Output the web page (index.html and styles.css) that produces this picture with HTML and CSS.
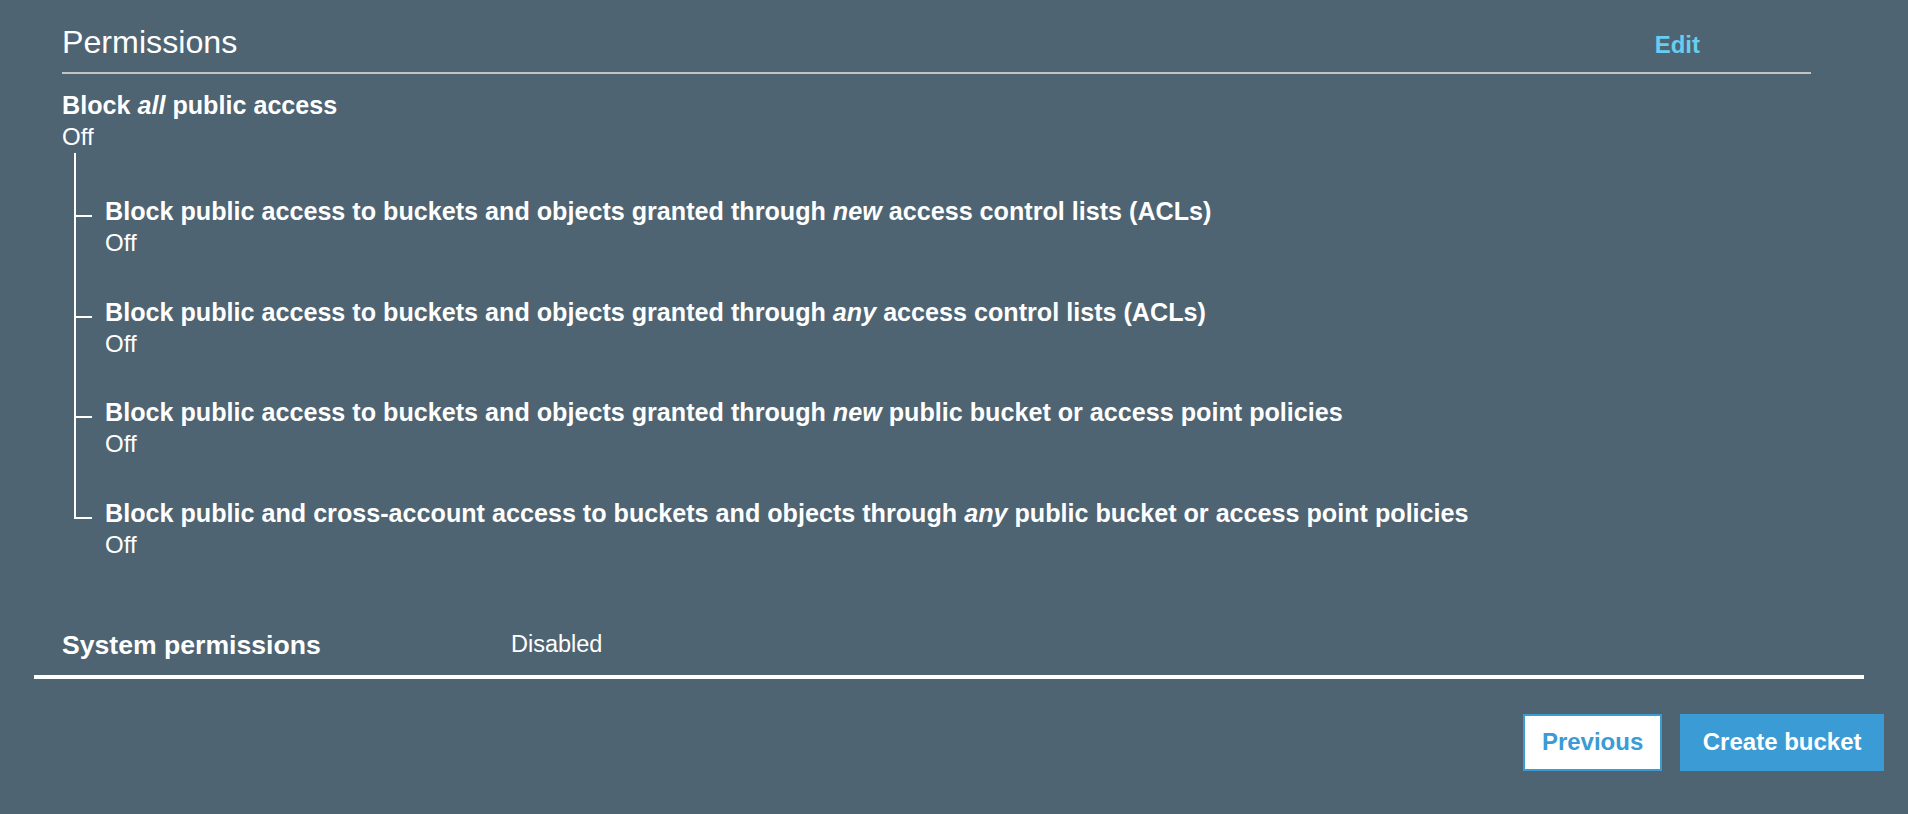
FILE: index.html
```html
<!DOCTYPE html>
<html lang="en">
<head>
<meta charset="utf-8">
<title>Permissions</title>
<link rel="stylesheet" href="styles.css">
</head>
<body>
<div class="page">
  <section class="panel">
    <div class="panel-head">
      <h2 class="panel-title">Permissions</h2>
      <a class="edit-link" href="#">Edit</a>
    </div>
    <div class="block-all">
      <div class="label">Block <em>all</em> public access</div>
      <div class="value">Off</div>
    </div>
    <ul class="tree">
      <li class="tree-item">
        <div class="label">Block public access to buckets and objects granted through <em>new</em> access control lists (ACLs)</div>
        <div class="value">Off</div>
      </li>
      <li class="tree-item">
        <div class="label">Block public access to buckets and objects granted through <em>any</em> access control lists (ACLs)</div>
        <div class="value">Off</div>
      </li>
      <li class="tree-item">
        <div class="label">Block public access to buckets and objects granted through <em>new</em> public bucket or access point policies</div>
        <div class="value">Off</div>
      </li>
      <li class="tree-item">
        <div class="label">Block public and cross-account access to buckets and objects through <em>any</em> public bucket or access point policies</div>
        <div class="value">Off</div>
      </li>
    </ul>
  </section>
  <div class="sys-row">
    <div class="sys-label">System permissions</div>
    <div class="sys-value">Disabled</div>
  </div>
  <div class="actions">
    <button class="btn btn-secondary" type="button">Previous</button>
    <button class="btn btn-primary" type="button">Create bucket</button>
  </div>
</div>
</body>
</html>
```

FILE: styles.css
```css
* { box-sizing: border-box; }

html, body {
  margin: 0;
  padding: 0;
  background: #4e6472;
}

body {
  font-family: "Liberation Sans", Arial, Helvetica, sans-serif;
  color: #ffffff;
  width: 1908px;
  height: 814px;
  overflow: hidden;
}

.page {
  display: flex;
  flex-direction: column;
}

.panel {
  margin-left: 62px;
  width: 1749px;
}

.panel-head {
  display: flex;
  align-items: baseline;
  justify-content: space-between;
  padding-top: 24px;
  padding-right: 111px;
  padding-bottom: 12px;
  border-bottom: 2px solid #c2c4c3;
}

.panel-title {
  margin: 0;
  font-size: 32.2px;
  line-height: 36px;
  font-weight: 400;
  color: #ffffff;
}

.edit-link {
  font-size: 24px;
  font-weight: 700;
  color: #68cdf0;
  text-decoration: none;
}

.label {
  font-size: 25.15px;
  line-height: 30px;
  font-weight: 700;
}

.label em {
  font-style: italic;
}

.value {
  font-size: 24px;
  line-height: 30px;
  font-weight: 400;
}

.block-all {
  margin-top: 16px;
}

.block-all .value {
  margin-top: 2px;
}

.tree {
  position: relative;
  list-style: none;
  margin: 0;
  padding: 44px 0 0 43px;
  display: flex;
  flex-direction: column;
  gap: 38.5px;
}

.tree::before {
  content: "";
  position: absolute;
  left: 12px;
  top: 1px;
  bottom: 42px;
  width: 2px;
  background: #ffffff;
}

.tree-item {
  position: relative;
}

.tree-item::before {
  content: "";
  position: absolute;
  left: -31px;
  top: 19px;
  width: 18px;
  height: 2px;
  background: #ffffff;
}

.tree-item .value {
  margin-top: 2px;
}

.sys-row {
  margin-top: 70px;
  margin-left: 34px;
  width: 1830px;
  padding-left: 28px;
  padding-bottom: 14px;
  border-bottom: 4px solid #ffffff;
  display: flex;
  align-items: flex-start;
}

.sys-label {
  width: 449px;
  font-size: 26.6px;
  line-height: 31px;
  font-weight: 700;
}

.sys-value {
  font-size: 23.5px;
  line-height: 28px;
  font-weight: 400;
}

.actions {
  display: flex;
  justify-content: flex-end;
  gap: 18px;
  margin-top: 35px;
  padding-right: 24px;
}

.btn {
  font-family: "Liberation Sans", Arial, Helvetica, sans-serif;
  font-size: 24px;
  font-weight: 700;
  height: 57px;
  margin: 0;
  cursor: pointer;
}

.btn-secondary {
  background: #ffffff;
  color: #3a9bd5;
  border: 2px solid #3a9bd5;
  padding: 0 17px;
}

.btn-primary {
  background: #3a9bd5;
  color: #ffffff;
  border: 0;
  padding: 0 22.5px;
}
```
